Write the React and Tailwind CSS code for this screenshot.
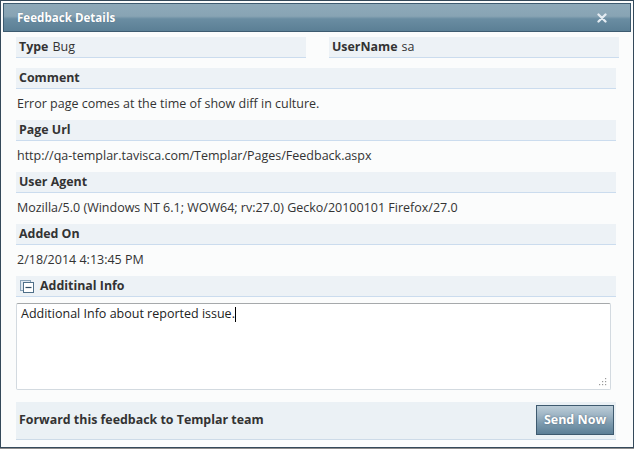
export default function App() {
  const font = { fontFamily: '"Open Sans", "Noto Sans", sans-serif' };
  const Header = ({ children }) => (
    <div className="h-[21px] bg-[#edf2f6] border-b border-[#cbdcee] flex items-center pl-[3px] pt-[1px] font-bold text-[#333] text-[12.4px]">
      {children}
    </div>
  );
  const Value = ({ children }) => (
    <div className="h-[31px] flex items-center pl-[1px] text-[12.5px] text-[#333]">{children}</div>
  );
  return (
    <div className="w-[634px] h-[449px] bg-[#8c8c8c]" style={font}>
      <div className="w-[634px] h-[448px] border border-[#34495a] bg-[#fbfcfc] p-[2px] flex flex-col">
        <div className="h-[29px] border border-[#3d5b70] flex items-center justify-between px-[13px] bg-[linear-gradient(to_bottom,#8ea9b9_0%,#88a4b4_45%,#6a8da2_55%,#5b7f95_100%)]">
          <span className="text-white font-bold text-[11.6px] [text-shadow:0_0_1px_rgba(60,80,100,0.5)]">Feedback Details</span>
          <svg width="10" height="10" viewBox="0 0 10 10" className="mr-[10px]">
            <path d="M1.5 1.5 L8.5 8.5 M8.5 1.5 L1.5 8.5" stroke="#e4ecf2" strokeWidth="2.3" strokeLinecap="round" />
          </svg>
        </div>
        <div className="pl-[13px] pr-[15px] pt-[5px] flex flex-col">
          <div className="flex gap-[23px]">
            <div className="w-[290px]"><Header><span>Type</span><span className="font-normal ml-[4px] text-[12.5px]">Bug</span></Header></div>
            <div className="flex-1 mr-[-3px]"><Header><span>UserName</span><span className="font-normal ml-[4px] text-[12.5px]">sa</span></Header></div>
          </div>
          <div className="h-[10px]" />
          <Header>Comment</Header>
          <Value>Error page comes at the time of show diff in culture.</Value>
          <Header>Page Url</Header>
          <Value>http://qa-templar.tavisca.com/Templar/Pages/Feedback.aspx</Value>
          <Header>User Agent</Header>
          <Value>Mozilla/5.0 (Windows NT 6.1; WOW64; rv:27.0) Gecko/20100101 Firefox/27.0</Value>
          <Header>Added On</Header>
          <Value>2/18/2014 4:13:45 PM</Value>
          <Header>
            <svg width="14" height="13" viewBox="0 0 14 13" className="ml-[1px] mr-[6px]">
              <rect x="0.5" y="0.5" width="10" height="10" fill="#dfe7ee" stroke="#8aa3b8" />
              <rect x="3.5" y="2.5" width="10" height="10" fill="#ffffff" stroke="#4f6f88" />
              <path d="M5.5 7.5 H11.5" stroke="#2f4a60" strokeWidth="1.2" />
            </svg>
            Additinal Info
          </Header>
          <div className="h-[6px]" />
          <div className="relative w-[595px] h-[87px] border border-[#d3dae0] border-t-[#a6a9ab] rounded-[2px] bg-white px-[4px] pt-[1px] text-[12.5px] text-[#222]">
            Additional Info about reported issue.<span className="inline-block w-px h-[15px] bg-black align-middle" />
            <svg width="8" height="8" viewBox="0 0 8 8" className="absolute right-[3px] bottom-[3px]">
              <rect x="6" y="0" width="1.2" height="1.2" fill="#999" />
              <rect x="3" y="3" width="1.2" height="1.2" fill="#999" />
              <rect x="6" y="3" width="1.2" height="1.2" fill="#999" />
              <rect x="0" y="6" width="1.2" height="1.2" fill="#999" />
              <rect x="3" y="6" width="1.2" height="1.2" fill="#999" />
              <rect x="6" y="6" width="1.2" height="1.2" fill="#999" />
            </svg>
          </div>
          <div className="h-[12px]" />
          <div className="h-[38px] bg-[#ebf1f5] border-b border-[#cddbe8] flex items-center justify-between pl-[3px] pr-[2px]">
            <span className="font-bold text-[12.4px] text-[#333]">Forward this feedback to Templar team</span>
            <button className="w-[78px] h-[30px] mt-[-1px] border border-[#3e5a6f] text-white font-bold text-[12.5px] bg-[linear-gradient(to_bottom,#bccdd8_0%,#9cb3c3_35%,#7a98ac_65%,#5c7f96_100%)] [text-shadow:0_0_2px_rgba(50,70,90,0.6)]">
              Send Now
            </button>
          </div>
        </div>
      </div>
    </div>
  );
}
